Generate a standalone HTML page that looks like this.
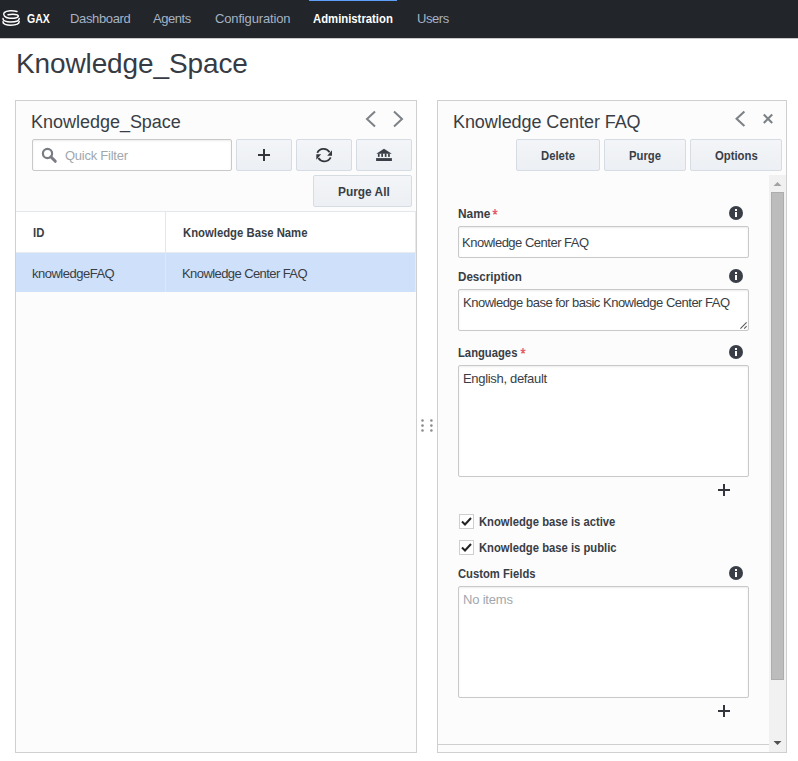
<!DOCTYPE html>
<html><head><meta charset="utf-8">
<style>
*{box-sizing:border-box;margin:0;padding:0}
html,body{width:798px;height:761px;overflow:hidden;background:#fff;font-family:"Liberation Sans",sans-serif;color:#393e46}
.a{position:absolute}
.t{position:absolute;white-space:nowrap;line-height:1;transform-origin:0 0}
.r13{font-size:13px;letter-spacing:-0.5px}
.b13{font-size:13px;font-weight:700;transform:scaleX(.87)}
.b12{font-size:12.5px;font-weight:700;transform:scaleX(.9)}
#nav{left:0;top:0;width:798px;height:38px;background:#222529}
.nv{font-size:13px;letter-spacing:-0.45px;color:#a6b3c3}
.panel{position:absolute;border:1px solid #cfcfcf;background:#fcfcfc}
.btn{position:absolute;height:32px;border:1px solid #d6dce3;border-radius:2px;background:linear-gradient(#f3f5f8,#eceff3)}
.inp{position:absolute;border:1px solid #c9c9c9;border-radius:2px;background:#fff;box-shadow:inset 0 1px 2px rgba(0,0,0,.075)}
.info{position:absolute;width:14px;height:14px;border-radius:50%;background:#3a3f47}
.info:before{content:"";position:absolute;left:6px;top:2.5px;width:2.2px;height:2.2px;background:#fff}
.info:after{content:"";position:absolute;left:6px;top:6px;width:2.2px;height:5px;background:#fff}
.ast{color:#e0595e;font-weight:400;font-size:15px}
</style></head><body>
<!-- NAV -->
<div id="nav" class="a"></div>
<div class="a" style="left:0;top:38px;width:798px;height:1px;background:#c9c9c9"></div>
<div class="a" style="left:309px;top:0;width:88px;height:1px;background:#5d9ef8"></div>
<svg class="a" style="left:0;top:0" width="24" height="30" viewBox="0 0 24 30">
  <g fill="none" stroke="#fff" stroke-width="1.5" stroke-linecap="round">
    <path d="M17 11.4 C13 10.4 6.5 10.4 4.2 12.6 C2.6 14.6 4.6 17.6 9.5 18.2 C14 18.7 18.3 17.8 18.3 16 C18.3 14.4 13 13.9 8 14.7"/>
    <path d="M3 18.6 C2.8 20.8 6.3 21.9 10.8 21.9 C15.3 21.9 19.2 20.9 19.2 18.4"/>
    <path d="M3 21.8 C2.8 24.2 6.3 25.2 10.8 25.2 C15.3 25.2 19.2 24.1 19.2 21.6"/>
  </g>
</svg>
<span class="t b13" style="left:27px;top:12px;color:#fff;transform:scaleX(.81)">GAX</span>
<span class="t nv" style="left:70px;top:12px;letter-spacing:-0.35px">Dashboard</span>
<span class="t nv" style="left:153px;top:12px">Agents</span>
<span class="t nv" style="left:215px;top:12px;letter-spacing:-0.15px">Configuration</span>
<span class="t b13" style="left:313px;top:12px;color:#fff">Administration</span>
<span class="t nv" style="left:417px;top:12px">Users</span>

<!-- PAGE TITLE -->
<span class="t" style="left:16px;top:50px;font-size:28px;letter-spacing:-0.12px;color:#363b44">Knowledge_Space</span>

<!-- LEFT PANEL -->
<div class="panel" style="left:15px;top:100px;width:402px;height:653px"></div>
<span class="t" style="left:31px;top:113px;font-size:18px;letter-spacing:-0.02px;color:#393e46">Knowledge_Space</span>
<svg class="a" style="left:363px;top:108px" width="44" height="22" viewBox="0 0 44 22">
  <path d="M12 3.5 L4 11 L12 18.5" fill="none" stroke="#7d8287" stroke-width="2"/>
  <path d="M31 3.5 L39 11 L31 18.5" fill="none" stroke="#7d8287" stroke-width="2"/>
</svg>
<div class="inp" style="left:32px;top:139px;width:200px;height:32px"></div>
<svg class="a" style="left:41px;top:147px" width="17" height="17" viewBox="0 0 17 17">
  <circle cx="6.5" cy="6.5" r="4.6" fill="none" stroke="#797d83" stroke-width="2.2"/>
  <path d="M9.8 9.8 L14.3 14.3" stroke="#797d83" stroke-width="3" stroke-linecap="round"/>
</svg>
<span class="t r13" style="left:65px;top:149px;color:#a1a7ae;letter-spacing:-0.25px">Quick Filter</span>
<div class="btn" style="left:236px;top:139px;width:56px"></div>
<div class="btn" style="left:296px;top:139px;width:56px"></div>
<div class="btn" style="left:356px;top:139px;width:56px"></div>
<svg class="a" style="left:257px;top:148px" width="14" height="14" viewBox="0 0 14 14">
  <path d="M7 1 V13 M1 7 H13" stroke="#33373d" stroke-width="2"/>
</svg>
<svg class="a" style="left:312px;top:143px" width="24" height="24" viewBox="0 0 24 24">
  <path d="M5.3 9.8 A7 7 0 0 1 17.6 9.2" fill="none" stroke="#33373d" stroke-width="1.8"/>
  <path d="M20 7.2 V12.7 H15.2 Z" fill="#33373d"/>
  <path d="M18.7 14.4 A7 7 0 0 1 6.4 15" fill="none" stroke="#33373d" stroke-width="1.8"/>
  <path d="M4.3 16.8 V11.2 H9.2 Z" fill="#33373d"/>
</svg>
<svg class="a" style="left:372px;top:143px" width="24" height="24" viewBox="0 0 24 24">
  <g fill="#3a3f47"><path d="M12 5.8 L19.8 10.7 H4.3 Z"/>
  <rect x="5.9" y="10.5" width="1.7" height="3.4"/><rect x="9.3" y="10.5" width="1.7" height="3.4"/>
  <rect x="12.8" y="10.5" width="1.7" height="3.4"/><rect x="16.1" y="10.5" width="1.7" height="3.4"/>
  <rect x="4.1" y="15.1" width="15.8" height="2.9"/></g>
</svg>
<div class="btn" style="left:313px;top:175px;width:99px"></div>
<span class="t b13" style="left:338px;top:185px;color:#393e46;transform:scaleX(.915)">Purge All</span>

<!-- TABLE -->
<div class="a" style="left:16px;top:211px;width:400px;height:42px;background:#fff;border-top:1px solid #e4e7eb;border-bottom:1px solid #e8ecf1"></div>
<div class="a" style="left:16px;top:253px;width:399px;height:39px;background:#cfe0fa"></div>
<div class="a" style="left:415px;top:212px;width:1px;height:80px;background:#e6eaef"></div>
<div class="a" style="left:165px;top:212px;width:1px;height:80px;background:#e3e6ea"></div>
<span class="t b13" style="left:33px;top:226px">ID</span>
<span class="t b13" style="left:183px;top:226px">Knowledge Base Name</span>
<span class="t r13" style="left:32px;top:267px">knowledgeFAQ</span>
<span class="t r13" style="left:182px;top:267px;letter-spacing:-0.58px">Knowledge Center FAQ</span>

<!-- SPLITTER -->
<svg class="a" style="left:419px;top:417px" width="16" height="16" viewBox="0 0 16 16">
  <g fill="#8c8c8c"><circle cx="3.5" cy="3.5" r="1.3"/><circle cx="12.4" cy="3.5" r="1.3"/>
  <circle cx="3.5" cy="8.6" r="1.3"/><circle cx="12.4" cy="8.6" r="1.3"/>
  <circle cx="3.5" cy="13.5" r="1.3"/><circle cx="12.4" cy="13.5" r="1.3"/></g>
</svg>

<!-- RIGHT PANEL -->
<div class="panel" style="left:437px;top:100px;width:350px;height:653px"></div>
<span class="t" style="left:453px;top:113px;font-size:18px;letter-spacing:-0.08px;color:#393e46">Knowledge Center FAQ</span>
<svg class="a" style="left:732px;top:108px" width="48" height="22" viewBox="0 0 48 22">
  <path d="M12.4 3.6 L4.6 10.8 L12.4 18" fill="none" stroke="#7d8287" stroke-width="2.1"/>
  <path d="M31.8 6.6 L40.2 15 M40.2 6.6 L31.8 15" fill="none" stroke="#7d8287" stroke-width="2.1"/>
</svg>
<div class="btn" style="left:516px;top:139px;width:84px"></div>
<div class="btn" style="left:604px;top:139px;width:82px"></div>
<div class="btn" style="left:690px;top:139px;width:92px"></div>
<span class="t b13" style="left:541px;top:149px">Delete</span>
<span class="t b13" style="left:629px;top:149px">Purge</span>
<span class="t b13" style="left:715px;top:149px">Options</span>

<!-- scrollbar -->
<div class="a" style="left:769px;top:175px;width:17px;height:577px;background:#f1f1f1"></div>
<svg class="a" style="left:773px;top:181px" width="9" height="6" viewBox="0 0 9 6"><path d="M0.5 5 L4.5 1 L8.5 5 Z" fill="#a3a3a3"/></svg>
<div class="a" style="left:771px;top:192px;width:13px;height:488px;background:#bcbcbc;border:1px solid #adadad"></div>
<svg class="a" style="left:773px;top:740px" width="9" height="6" viewBox="0 0 9 6"><path d="M0.5 1 L4.5 5 L8.5 1 Z" fill="#505050"/></svg>
<div class="a" style="left:438px;top:744px;width:331px;height:1px;background:#cfcfcf"></div>

<!-- FORM -->
<span class="t b12" style="left:458px;top:208px;transform:scaleX(.95)">Name</span><svg class="a" style="left:490px;top:207.2px" width="10" height="10" viewBox="-5 -5 10 10"><path d="M0 0 V-3 M0 0 L2.45 -0.8 M0 0 L1.5 2.45 M0 0 L-1.5 2.45 M0 0 L-2.45 -0.8" stroke="#e35d66" stroke-width="1.3" stroke-linecap="butt"/></svg>
<div class="info" style="left:729px;top:206px"></div>
<div class="inp" style="left:458px;top:226px;width:291px;height:32px"></div>
<span class="t r13" style="left:462px;top:236px">Knowledge Center FAQ</span>

<span class="t b12" style="left:458px;top:271px;transform:scaleX(.93)">Description</span>
<div class="info" style="left:729px;top:269px"></div>
<div class="inp" style="left:458px;top:289px;width:291px;height:42px"></div>
<span class="t r13" style="left:463px;top:296px">Knowledge base for basic Knowledge Center FAQ</span>
<svg class="a" style="left:738px;top:320px" width="10" height="10" viewBox="0 0 10 10">
  <path d="M2.4 8.6 L8.6 2.4 M6.2 8.6 L8.6 6.2" stroke="#5a5a5a" stroke-width="1.1"/>
</svg>

<span class="t b12" style="left:458px;top:347px;transform:scaleX(.9)">Languages</span><svg class="a" style="left:518px;top:346.1px" width="10" height="10" viewBox="-5 -5 10 10"><path d="M0 0 V-3 M0 0 L2.45 -0.8 M0 0 L1.5 2.45 M0 0 L-1.5 2.45 M0 0 L-2.45 -0.8" stroke="#e35d66" stroke-width="1.3" stroke-linecap="butt"/></svg>
<div class="info" style="left:729px;top:345px"></div>
<div class="inp" style="left:458px;top:365px;width:291px;height:112px"></div>
<span class="t r13" style="left:463px;top:372px;letter-spacing:-0.32px">English, default</span>
<svg class="a" style="left:717px;top:483px" width="14" height="14" viewBox="0 0 14 14">
  <path d="M7 1 V13 M1 7 H13" stroke="#33373d" stroke-width="2"/>
</svg>

<div class="a" style="left:459px;top:514px;width:15px;height:15px;border:1px solid #cfcfcf;background:#fff"></div>
<svg class="a" style="left:459px;top:514px" width="15" height="15" viewBox="0 0 15 15"><path d="M3 7.5 L6 10.5 L12 4" fill="none" stroke="#222" stroke-width="2"/></svg>
<span class="t b12" style="left:479px;top:516px">Knowledge base is active</span>
<div class="a" style="left:459px;top:540px;width:15px;height:15px;border:1px solid #cfcfcf;background:#fff"></div>
<svg class="a" style="left:459px;top:540px" width="15" height="15" viewBox="0 0 15 15"><path d="M3 7.5 L6 10.5 L12 4" fill="none" stroke="#222" stroke-width="2"/></svg>
<span class="t b12" style="left:479px;top:542px">Knowledge base is public</span>

<span class="t b12" style="left:458px;top:568px">Custom Fields</span>
<div class="info" style="left:729px;top:566px"></div>
<div class="inp" style="left:458px;top:586px;width:291px;height:112px"></div>
<span class="t r13" style="left:463px;top:593px;color:#a1a7ae;letter-spacing:-0.2px">No items</span>
<svg class="a" style="left:717px;top:704px" width="14" height="14" viewBox="0 0 14 14">
  <path d="M7 1 V13 M1 7 H13" stroke="#33373d" stroke-width="2"/>
</svg>
</body></html>
